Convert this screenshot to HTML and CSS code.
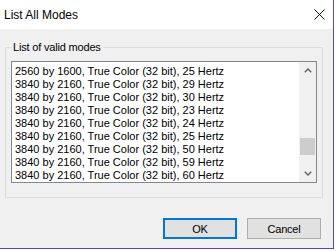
FILE: index.html
```html
<!DOCTYPE html>
<html>
<head>
<meta charset="utf-8">
<link rel="stylesheet" href="styles.css">
</head>
<body>
<div class="window">
  <div class="titlebar">
    <span class="title">List All Modes</span>
    <svg class="close" width="11" height="11" viewBox="0 0 11 11"><path d="M0.5 0.5 L10.5 10.5 M10.5 0.5 L0.5 10.5" stroke="#111" stroke-width="1" fill="none"/></svg>
  </div>
  <div class="content">
    <fieldset class="group">
      <legend class="legend">List of valid modes</legend>
      <div class="listbox">
        <div class="rows">
          <div class="row">2560 by 1600, True Color (32 bit), 25 Hertz</div>
          <div class="row">3840 by 2160, True Color (32 bit), 29 Hertz</div>
          <div class="row">3840 by 2160, True Color (32 bit), 30 Hertz</div>
          <div class="row">3840 by 2160, True Color (32 bit), 23 Hertz</div>
          <div class="row">3840 by 2160, True Color (32 bit), 24 Hertz</div>
          <div class="row">3840 by 2160, True Color (32 bit), 25 Hertz</div>
          <div class="row">3840 by 2160, True Color (32 bit), 50 Hertz</div>
          <div class="row">3840 by 2160, True Color (32 bit), 59 Hertz</div>
          <div class="row">3840 by 2160, True Color (32 bit), 60 Hertz</div>
        </div>
        <div class="scrollbar">
          <div class="arrow">
            <svg width="8" height="5" viewBox="0 0 8 5"><path d="M0.8 4.3 L4 1.1 L7.2 4.3" stroke="#606060" stroke-width="1.4" fill="none"/></svg>
          </div>
          <div class="track">
            <div class="thumb"></div>
          </div>
          <div class="arrow">
            <svg width="8" height="5" viewBox="0 0 8 5"><path d="M0.8 0.7 L4 3.9 L7.2 0.7" stroke="#606060" stroke-width="1.4" fill="none"/></svg>
          </div>
        </div>
      </div>
    </fieldset>
    <div class="buttons">
      <button class="btn btn-default">OK</button>
      <button class="btn">Cancel</button>
    </div>
  </div>
</div>
</body>
</html>
```

FILE: styles.css
```css
html, body {
  margin: 0;
  padding: 0;
  background: #ffffff;
}

.window {
  width: 334px;
  height: 249px;
  box-sizing: border-box;
  border-right: 1px solid #5b44c8;
  border-bottom: 1px solid #5b44c8;
  display: flex;
  flex-direction: column;
  font-family: "Liberation Sans", Arial, sans-serif;
  color: #000;
}

.titlebar {
  height: 29px;
  flex: none;
  background: #ffffff;
  display: flex;
  align-items: center;
  justify-content: space-between;
  padding: 0 8px 0 4px;
}

.title {
  font-size: 12px;
  line-height: 14px;
  margin-top: 0px;
}

.close {
  display: block;
  margin-top: -1px;
}

.content {
  flex: 1;
  background: #f0f0f0;
  display: flex;
  flex-direction: column;
}

.group {
  margin: 12px 0 0 5px;
  width: 318px;
  box-sizing: border-box;
  border: 1px solid #dcdcdc;
  padding: 8px 5px 14px 5px;
  min-width: 0;
}

.legend {
  padding: 0 2px;
  font-size: 11px;
  line-height: 12px;
  letter-spacing: -0.18px;
}

.listbox {
  height: 122px;
  box-sizing: border-box;
  border: 1px solid #828790;
  background: #ffffff;
  display: flex;
}

.rows {
  flex: 1;
  overflow: hidden;
  padding: 3px 0 0 3px;
}

.row {
  font-size: 11px;
  line-height: 13px;
  height: 13px;
  white-space: nowrap;
}

.scrollbar {
  width: 17px;
  flex: none;
  background: #f0f0f0;
  display: flex;
  flex-direction: column;
}

.arrow {
  height: 17px;
  flex: none;
  display: flex;
  align-items: center;
  justify-content: center;
}

.track {
  flex: 1;
  padding-top: 59px;
}

.thumb {
  height: 17px;
  margin: 0 1px;
  background: #cdcdcd;
}

.buttons {
  display: flex;
  justify-content: flex-end;
  gap: 10px;
  margin-top: 20px;
  padding-right: 12px;
}

.btn {
  width: 74px;
  height: 21px;
  box-sizing: border-box;
  border: 1px solid #adadad;
  background: #e1e1e1;
  font-family: "Liberation Sans", Arial, sans-serif;
  font-size: 11px;
  letter-spacing: -0.2px;
  color: #000;
  padding: 0;
  margin: 0;
}

.btn-default {
  border: 2px solid #0078d7;
}
```
